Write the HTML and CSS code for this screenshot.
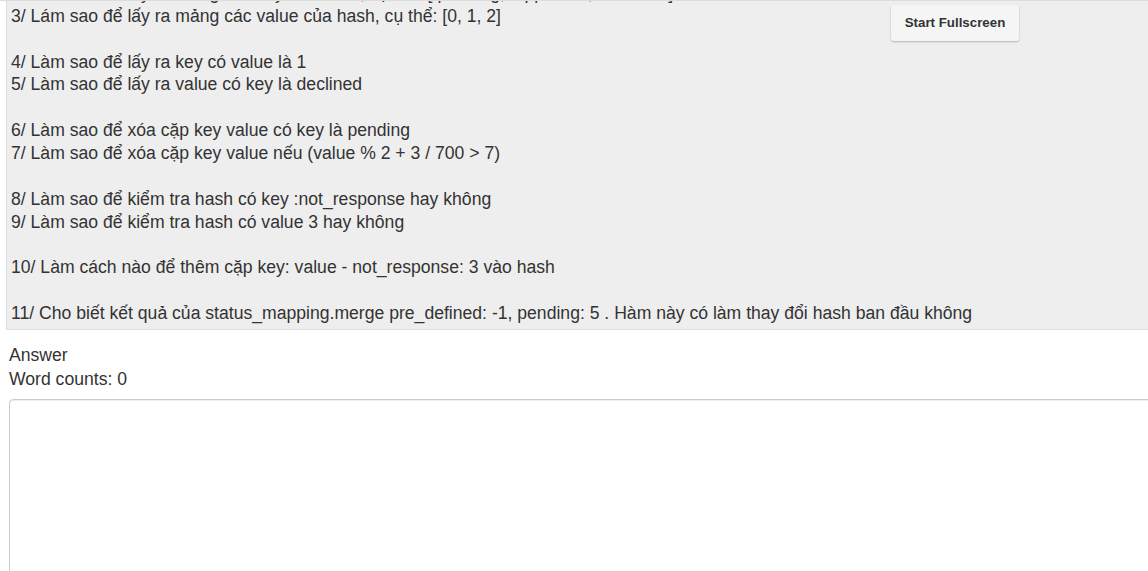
FILE: index.html
```html
<!DOCTYPE html>
<html lang="vi">
<head>
<meta charset="utf-8">
<title>Question</title>
<link rel="stylesheet" href="styles.css">
</head>
<body>
<div class="topline"></div>
<div class="page">
  <div class="question">
    <div class="q-line">2/ Làm sao để lấy ra mảng các key của hash, cụ thể: [:pending, :approved, :declined]</div>
    <div class="q-line">3/ Lám sao để lấy ra mảng các value của hash, cụ thể: [0, 1, 2]</div>
    <div class="q-line blank"></div>
    <div class="q-line">4/ Làm sao để lấy ra key có value là 1</div>
    <div class="q-line">5/ Làm sao để lấy ra value có key là declined</div>
    <div class="q-line blank"></div>
    <div class="q-line">6/ Làm sao để xóa cặp key value có key là pending</div>
    <div class="q-line">7/ Làm sao để xóa cặp key value nếu (value % 2 + 3 / 700 &gt; 7)</div>
    <div class="q-line blank"></div>
    <div class="q-line">8/ Làm sao để kiểm tra hash có key :not_response hay không</div>
    <div class="q-line">9/ Làm sao để kiểm tra hash có value 3 hay không</div>
    <div class="q-line blank"></div>
    <div class="q-line">10/ Làm cách nào để thêm cặp key: value - not_response: 3 vào hash</div>
    <div class="q-line blank"></div>
    <div class="q-line">11/ Cho biết kết quả của status_mapping.merge pre_defined: -1, pending: 5 . Hàm này có làm thay đổi hash ban đầu không</div>
  </div>
  <div class="answer">
    <div class="answer-label">Answer</div>
    <div class="word-count">Word counts: 0</div>
    <textarea class="answer-input"></textarea>
  </div>
</div>
<button class="fullscreen-btn">Start Fullscreen</button>
</body>
</html>
```

FILE: styles.css
```css
html, body {
  margin: 0;
  padding: 0;
  overflow: hidden;
  background: #fff;
}
body {
  font-family: "Liberation Sans", Arial, sans-serif;
  font-size: 17.6px;
  line-height: 22.857px;
  color: #333;
  width: 1148px;
  height: 571px;
  position: relative;
}
.topline {
  position: fixed;
  top: 0;
  left: 0;
  right: 0;
  height: 1px;
  background: #dcdcdc;
  z-index: 2;
}
.page {
  display: flex;
  flex-direction: column;
}
.question {
  margin: -19px 0 0 6px;
  padding: 0 0 4px 4px;
  background: #eee;
  border: 1px solid #ddd;
  border-right: none;
  white-space: nowrap;
}
.q-line.blank {
  height: 22.857px;
}
.answer {
  padding: 13px 0 0 9px;
  display: flex;
  flex-direction: column;
  line-height: 24px;
}
.answer-input {
  margin-top: 8px;
  width: 1200px;
  height: 300px;
  border: 1px solid #ccc;
  border-radius: 4px;
  box-shadow: inset 0 1px 1px rgba(0,0,0,.075);
  background: #fff;
  resize: none;
  box-sizing: border-box;
}
.fullscreen-btn {
  position: absolute;
  top: 5px;
  left: 891px;
  width: 128px;
  height: 36px;
  font-family: "Liberation Sans", Arial, sans-serif;
  font-size: 13.3px;
  font-weight: bold;
  line-height: 36px;
  color: #333;
  background: #f5f5f5;
  border: none;
  border-radius: 3px;
  box-shadow: 0 1px 2px rgba(0,0,0,.25);
  padding: 0;
}
```
